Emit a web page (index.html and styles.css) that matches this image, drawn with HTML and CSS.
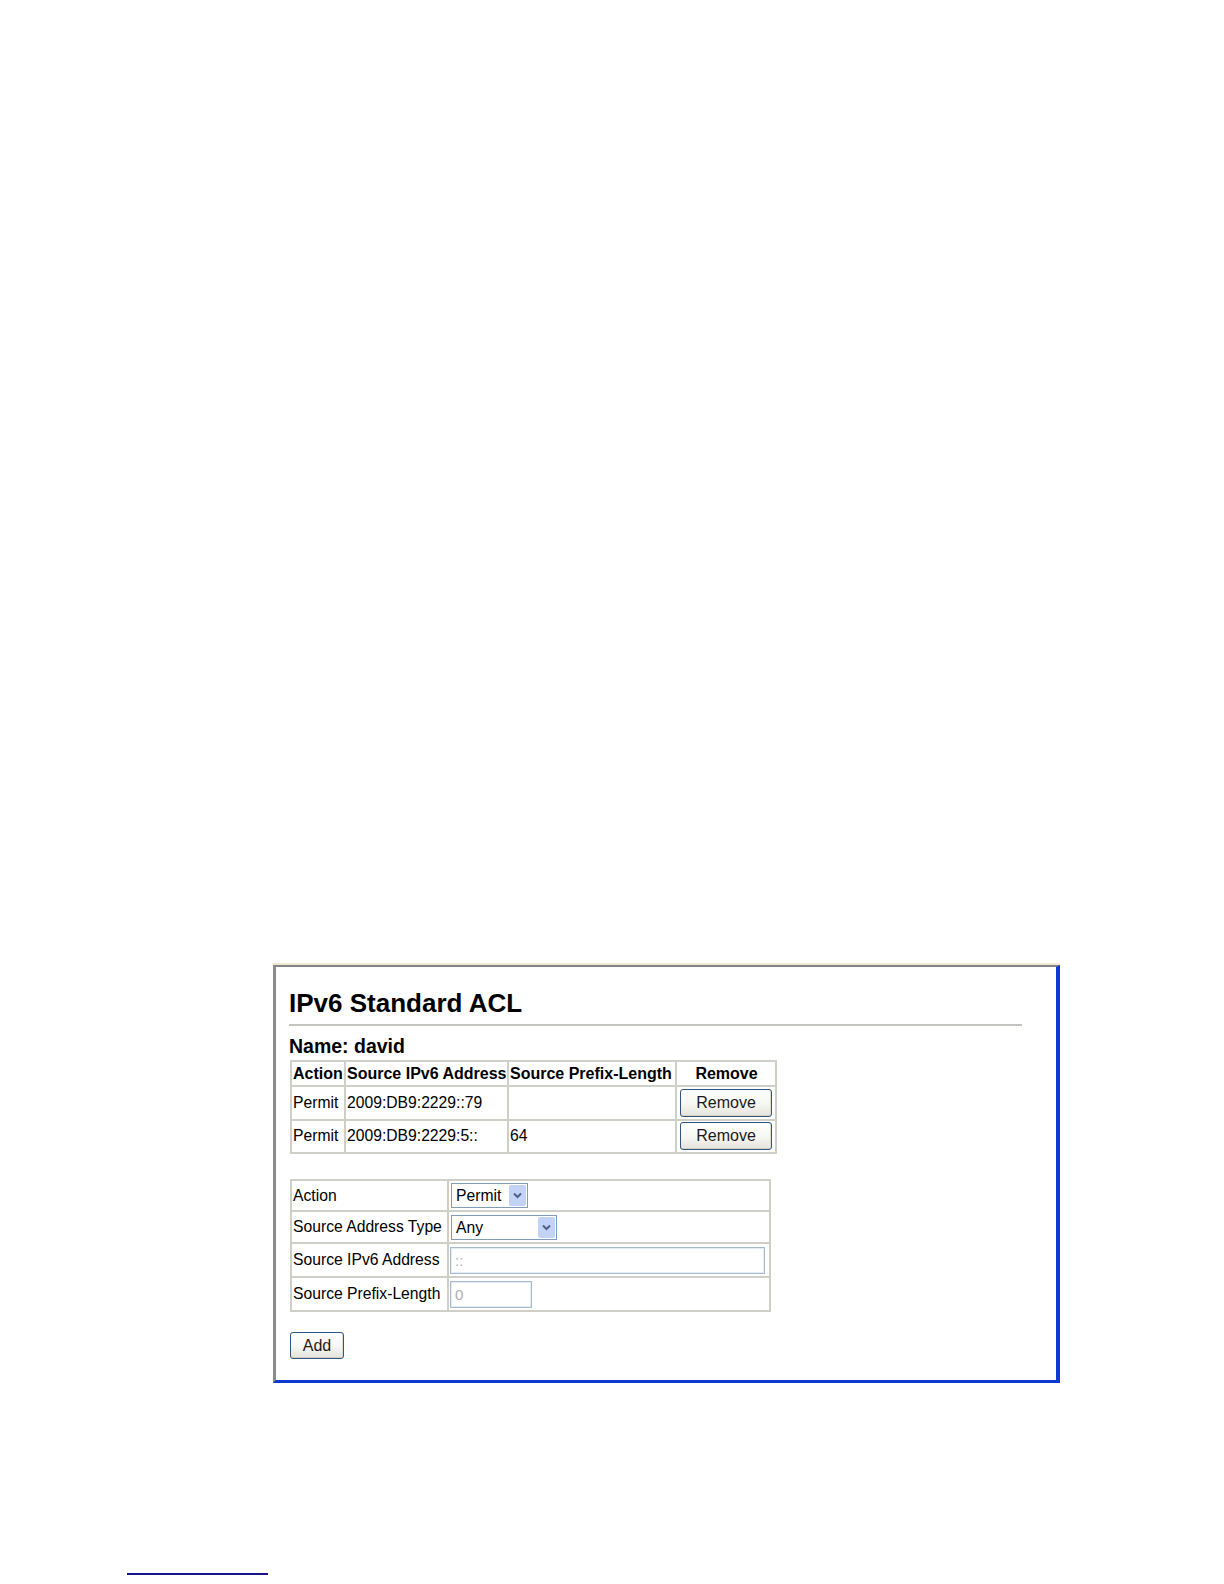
FILE: index.html
```html
<!DOCTYPE html>
<html>
<head>
<meta charset="utf-8">
<title>IPv6 Standard ACL</title>
<link rel="stylesheet" href="styles.css">
</head>
<body>
<div class="page">
  <div class="frame">
    <h1 class="title">IPv6 Standard ACL</h1>
    <div class="rule"></div>
    <h2 class="name">Name: david</h2>
    <table class="list">
      <colgroup>
        <col class="c1"><col class="c2"><col class="c3"><col class="c4">
      </colgroup>
      <tr class="head">
        <th>Action</th><th>Source IPv6 Address</th><th>Source Prefix-Length</th><th>Remove</th>
      </tr>
      <tr class="row">
        <td>Permit</td><td>2009:DB9:2229::79</td><td></td><td class="btncell"><button class="btn rm">Remove</button></td>
      </tr>
      <tr class="row">
        <td>Permit</td><td>2009:DB9:2229:5::</td><td>64</td><td class="btncell"><button class="btn rm">Remove</button></td>
      </tr>
    </table>

    <table class="form">
      <colgroup><col class="f1"><col class="f2"></colgroup>
      <tr class="r1">
        <td>Action</td>
        <td><div class="select sel-permit"><span class="val">Permit</span><span class="arrow"><svg width="9" height="7" viewBox="0 0 9 7"><path d="M1 1.5 L4.5 5 L8 1.5" fill="none" stroke="#4d6185" stroke-width="2"/></svg></span></div></td>
      </tr>
      <tr class="r2">
        <td>Source Address Type</td>
        <td><div class="select sel-any"><span class="val">Any</span><span class="arrow"><svg width="9" height="7" viewBox="0 0 9 7"><path d="M1 1.5 L4.5 5 L8 1.5" fill="none" stroke="#4d6185" stroke-width="2"/></svg></span></div></td>
      </tr>
      <tr class="r3">
        <td>Source IPv6 Address</td>
        <td><div class="input in-addr">::</div></td>
      </tr>
      <tr class="r4">
        <td>Source Prefix-Length</td>
        <td><div class="input in-len">0</div></td>
      </tr>
    </table>

    <button class="btn add">Add</button>
  </div>
  <div class="footrule"></div>
</div>
</body>
</html>
```

FILE: styles.css
```css
html, body {
  margin: 0;
  padding: 0;
  background: #ffffff;
}
body {
  font-family: "Liberation Sans", Arial, sans-serif;
  color: #000;
}
.page {
  width: 1224px;
  height: 1584px;
  overflow: hidden;
  padding-top: 965px;
  box-sizing: border-box;
}
.frame {
  margin-left: 273px;
  width: 787px;
  height: 418px;
  box-sizing: border-box;
  border-top: 2px solid #858585;
  border-left: 3px solid #8c8c8c;
  border-right: 4px solid #0b3ccf;
  border-bottom: 3px solid #0b3ccf;
  box-shadow: 0 -2px 0 #ecebd2;
  padding: 21px 0 0 13px;
  background: #fff;
}
.title {
  margin: 0;
  font-size: 26px;
  line-height: 31px;
  font-weight: bold;
}
.rule {
  margin-top: 5px;
  width: 733px;
  height: 2px;
  background: #c4c4c0;
}
.name {
  margin: 9px 0 3px 0;
  font-size: 19.5px;
  line-height: 22px;
  font-weight: bold;
}
table {
  border-collapse: collapse;
  font-size: 15.7px;
  table-layout: fixed;
}
.list {
  width: 485px;
  margin-left: 1px;
  border: 2px solid #cfcfc8;
}
.list td, .list th {
  border: 2px solid #cfcfc8;
  padding: 0 0 0 1px;
  white-space: nowrap;
  overflow: hidden;
}
.c1 { width: 54px; }
.c2 { width: 163px; }
.c3 { width: 168px; }
.c4 { width: 100px; }
.head th {
  height: 23px;
  font-weight: bold;
  font-size: 16px;
  text-align: center;
}
.head th:first-child, .head th:nth-child(2), .head th:nth-child(3) {
  text-align: left;
}
.row td {
  height: 31.5px;
}
.list td.btncell {
  text-align: center;
  padding: 0;
}
.btn {
  font-family: "Liberation Sans", Arial, sans-serif;
  font-size: 16px;
  color: #1a1a1a;
  background: linear-gradient(#ffffff, #f6f6f2 55%, #e4e3dc);
  border: 1px solid #2f5683;
  border-radius: 3px;
  padding: 0;
  box-shadow: inset 0 -1px 0 #d6d0c0, inset -1px 0 0 #e0dcd0;
}
.rm {
  width: 92px;
  height: 28px;
}
.form {
  width: 479px;
  margin: 25px 0 0 1px;
  border: 2px solid #cfcfc8;
}
.form td {
  border: 2px solid #cfcfc8;
  padding: 0 0 0 1px;
  white-space: nowrap;
}
.f1 { width: 157px; }
.f2 { width: 322px; }
.r1 td { height: 29px; }
.r2 td { height: 30px; }
.r3 td { height: 32px; }
.r4 td { height: 32px; }
.select {
  display: flex;
  align-items: stretch;
  height: 25px;
  box-sizing: border-box;
  border: 1px solid #7f9db9;
  background: #fff;
  margin-left: 1px;
}
.select .val {
  flex: 1;
  padding-left: 4px;
  line-height: 23px;
}
.select .arrow {
  width: 17px;
  margin: 1px;
  background: #c3d3f8;
  border-radius: 2px;
  display: flex;
  align-items: center;
  justify-content: center;
}
.sel-permit { width: 77px; }
.sel-any { width: 106px; }
.input {
  height: 27px;
  box-sizing: border-box;
  border: 1px solid #a5b9cf;
  box-shadow: inset 0 0 0 1px #e4ecf4;
  color: #b0b0b0;
  font-size: 15px;
  line-height: 25px;
  padding-left: 4px;
}
.in-addr { width: 315px; }
.in-len { width: 82px; }
.add {
  display: block;
  margin: 20px 0 0 1px;
  width: 54px;
  height: 27px;
}
.footrule {
  margin: 190px 0 0 127px;
  width: 141px;
  height: 2px;
  background: #15168a;
}
```
